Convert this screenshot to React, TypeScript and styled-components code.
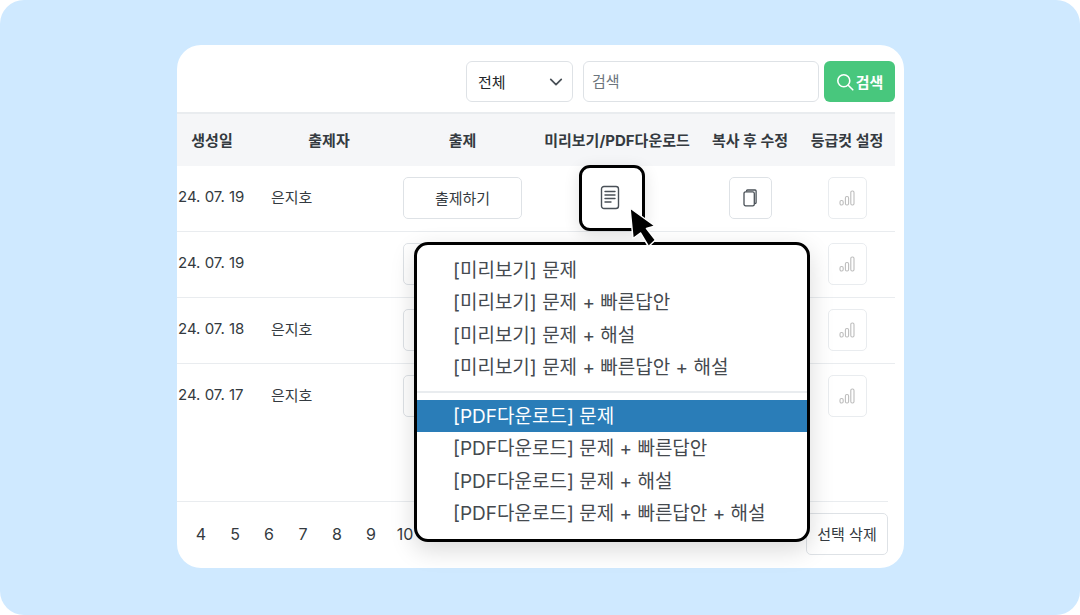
import styled, { createGlobalStyle } from "styled-components"

const GlobalStyle = createGlobalStyle`
    html, body { margin: 0; padding: 0; background: #fff; }
    body { font-family: Inter, "Noto Sans CJK KR", sans-serif; color: #212529; }
`

const ROWS = [
    { date: "24. 07. 19", author: "은지호" },
    { date: "24. 07. 19", author: "" },
    { date: "24. 07. 18", author: "은지호" },
    { date: "24. 07. 17", author: "은지호" },
]
const PREVIEW = ["문제", "문제 + 빠른답안", "문제 + 해설", "문제 + 빠른답안 + 해설"]
const PAGES = [4, 5, 6, 7, 8, 9, 10]

export default function App() {
    return (
        <>
            <GlobalStyle />
            <Stage>
                <Card>
                    <Toolbar>
                        <SelectBox>
                            전체
                            <svg width="14" height="14" viewBox="0 0 16 16" fill="none" stroke="#495057" strokeWidth="2" strokeLinecap="round" strokeLinejoin="round">
                                <path d="M2 5l6 6 6-6" />
                            </svg>
                        </SelectBox>
                        <SearchInput>검색</SearchInput>
                        <SearchButton>
                            <svg width="18" height="18" viewBox="0 0 18 18" fill="none" stroke="#fff" strokeWidth="1.6" strokeLinecap="round">
                                <circle cx="7.8" cy="7.8" r="6" />
                                <path d="M12.2 12.2l4.6 4.6" />
                            </svg>
                            검색
                        </SearchButton>
                    </Toolbar>
                    <HeadRow>
                        <DateCol>생성일</DateCol>
                        <AuthorCol>출제자</AuthorCol>
                        <ExamCol>출제</ExamCol>
                        <PreviewCol>미리보기/PDF다운로드</PreviewCol>
                        <CopyCol>복사 후 수정</CopyCol>
                        <GradeCol>등급컷 설정</GradeCol>
                    </HeadRow>
                    {ROWS.map((row, i) => (
                        <BodyRow key={i} $last={i === ROWS.length - 1}>
                            <DateCell>{row.date}</DateCell>
                            <AuthorCell>{row.author}</AuthorCell>
                            {/* the menu covers the label on the lower rows */}
                            <ExamCol><OutlineButton>{i === 0 ? "출제하기" : ""}</OutlineButton></ExamCol>
                            <PreviewCol>
                                {i === 0 && (
                                    <HighlightBox>
                                        <svg width="20" height="25" viewBox="0 0 20 25" fill="none" stroke="#495057" strokeWidth="1.4" strokeLinecap="round">
                                            <rect x="1.5" y="1.5" width="17" height="22" rx="2.5" />
                                            <path d="M5 6.5h10M5 10h10M5 13.5h10M5 17h6" />
                                        </svg>
                                    </HighlightBox>
                                )}
                            </PreviewCol>
                            <CopyCol>
                                {i === 0 && (
                                    <IconButton>
                                        <svg width="14" height="18" viewBox="0 0 14 18" fill="none" stroke="#495057" strokeWidth="1.3" strokeLinejoin="round">
                                            <path d="M3.5 2.6V2a1 1 0 0 1 1-1h7.6a1 1 0 0 1 1 1v11.5a1 1 0 0 1-1 1h-.6" />
                                            <rect x="1" y="2.8" width="10.3" height="14" rx="1.6" />
                                        </svg>
                                    </IconButton>
                                )}
                            </CopyCol>
                            <GradeCol>
                                <GradeButton>
                                    <svg width="16" height="16" viewBox="0 0 16 16" fill="none" stroke="#bdbdbd" strokeWidth="1.1">
                                        <rect x="1" y="10.5" width="3.2" height="4.5" rx="1.4" />
                                        <rect x="6.4" y="6.5" width="3.2" height="8.5" rx="1.4" />
                                        <rect x="11.8" y="1" width="3.2" height="14" rx="1.4" />
                                    </svg>
                                </GradeButton>
                            </GradeCol>
                        </BodyRow>
                    ))}
                    <Footer>
                        <Pages>
                            {PAGES.map((p) => <PageNum key={p}>{p}</PageNum>)}
                        </Pages>
                        <DeleteButton>선택 삭제</DeleteButton>
                    </Footer>
                </Card>
                <Menu>
                    {PREVIEW.map((t) => <MenuItem key={t}>[미리보기] {t}</MenuItem>)}
                    <MenuDivider />
                    {PREVIEW.map((t, i) => <MenuItem key={t} $active={i === 0}>[PDF다운로드] {t}</MenuItem>)}
                </Menu>
                <Cursor width="28" height="41" viewBox="0 0 28 41">
                    <path d="M1 1L26 19 17.5 21.5 26.5 33 19.5 39.5 11.5 26 4 31.5z" fill="#000" stroke="#fff" strokeWidth="1.5" strokeLinejoin="round" />
                </Cursor>
            </Stage>
        </>
    )
}

const Stage = styled.div`
    position: relative;
    width: 1080px;
    height: 615px;
    box-sizing: border-box;
    padding: 45px 176px 47px 177px;
    background: #cfe9ff;
    border-radius: 24px;
    overflow: hidden;
`

const Card = styled.div`
    height: 523px;
    padding-right: 9px;
    background: #fff;
    border-radius: 24px;
    overflow: hidden;
    display: flex;
    flex-direction: column;
`

const Toolbar = styled.div`
    height: 67px;
    flex: none;
    display: flex;
    align-items: center;
    justify-content: flex-end;
    gap: 10px;
    padding-top: 6px;
    box-sizing: border-box;
`

const SelectBox = styled.div`
    width: 107px;
    height: 41px;
    box-sizing: border-box;
    border: 1px solid #dee2e6;
    border-radius: 6px;
    padding: 0 9px 0 11px;
    display: flex;
    align-items: center;
    justify-content: space-between;
    font-size: 15px;
    color: #212529;
`

const SearchInput = styled.div`
    width: 236px;
    height: 41px;
    box-sizing: border-box;
    border: 1px solid #dee2e6;
    border-radius: 6px;
    padding: 0 8px 2px;
    display: flex;
    align-items: center;
    font-size: 15px;
    color: #6c757d;
`

const SearchButton = styled.div`
    width: 71px;
    height: 41px;
    margin-left: -5px;
    background: #48c77d;
    border-radius: 6px;
    color: #fff;
    font-size: 15px;
    font-weight: 700;
    display: flex;
    align-items: center;
    justify-content: center;
    gap: 2px;
`

const HeadRow = styled.div`
    height: 54px;
    flex: none;
    box-sizing: border-box;
    display: flex;
    align-items: center;
    background: #f5f6f8;
    border-top: 2px solid #e9ecef;
    padding-bottom: 2px;
    font-size: 15px;
    font-weight: 700;
    color: #343a40;
`

const BodyRow = styled.div<{ $last?: boolean }>`
    height: 66px;
    flex: none;
    box-sizing: border-box;
    display: flex;
    align-items: center;
    padding-bottom: 2px;
    border-bottom: 1px solid ${(p) => (p.$last ? "transparent" : "#e9ecef")};
    font-size: 15px;
    color: #343a40;
`

const Col = styled.div`
    flex: none;
    display: flex;
    align-items: center;
    justify-content: center;
    white-space: nowrap;
`

const DateCol = styled(Col)`
    width: 89px;
    box-sizing: border-box;
    padding-right: 19px;
`

const AuthorCol = styled(Col)`
    width: 126px;
`

const ExamCol = styled(Col)`
    width: 141px;
`

const PreviewCol = styled(Col)`
    width: 168px;
`

const CopyCol = styled(Col)`
    width: 98px;
`

const GradeCol = styled(Col)`
    width: 96px;
`

const DateCell = styled(Col)`
    width: 89px;
    box-sizing: border-box;
    justify-content: flex-start;
    padding: 0 0 2px 1px;
`

const AuthorCell = styled(Col)`
    width: 126px;
    box-sizing: border-box;
    justify-content: flex-start;
    padding: 0 0 2px 5px;
`

const OutlineButton = styled.div`
    width: 119px;
    height: 42px;
    box-sizing: border-box;
    border: 1px solid #dee2e6;
    border-radius: 5px;
    padding-bottom: 1px;
    display: flex;
    align-items: center;
    justify-content: center;
    font-size: 15px;
`

const HighlightBox = styled.div`
    width: 66px;
    height: 66px;
    margin-right: 10px;
    padding-right: 4px;
    box-sizing: border-box;
    border: 3px solid #000;
    border-radius: 11px;
    background: #fff;
    display: flex;
    align-items: center;
    justify-content: center;
    box-shadow: 0 4px 16px rgba(0, 0, 0, 0.12);
`

const IconButton = styled.div`
    width: 43px;
    height: 42px;
    box-sizing: border-box;
    border: 1px solid #dee2e6;
    border-radius: 5px;
    display: flex;
    align-items: center;
    justify-content: center;
`

const GradeButton = styled(IconButton)`
    width: 39px;
    border-color: #e9ecef;
`

const Footer = styled.div`
    margin-top: auto;
    margin-right: 7px;
    height: 67px;
    flex: none;
    box-sizing: border-box;
    border-top: 1px solid #e9ecef;
    display: flex;
    align-items: center;
    justify-content: space-between;
    padding: 11px 0 13px;
`

const Pages = styled.div`
    display: flex;
    padding-left: 7px;
`

const PageNum = styled.span`
    width: 34px;
    text-align: center;
    font-size: 16px;
    color: #343a40;
`

const DeleteButton = styled.div`
    width: 82px;
    height: 42px;
    box-sizing: border-box;
    border: 1px solid #dee2e6;
    border-radius: 5px;
    padding-bottom: 2px;
    display: flex;
    align-items: center;
    justify-content: center;
    font-size: 15px;
    color: #343a40;
`

const Menu = styled.div`
    position: absolute;
    left: 414px;
    top: 242px;
    width: 396px;
    height: 300px;
    box-sizing: border-box;
    padding: 9px 0;
    background: #fff;
    border: 3px solid #000;
    border-radius: 14px;
    box-shadow: 0 8px 24px rgba(0, 0, 0, 0.15);
`

const MenuItem = styled.div<{ $active?: boolean }>`
    height: 32.4px;
    line-height: 34px;
    padding-left: 36px;
    font-size: 19px;
    white-space: nowrap;
    color: ${(p) => (p.$active ? "#fff" : "#454a4f")};
    background: ${(p) => (p.$active ? "#2a7db8" : "transparent")};
`

const MenuDivider = styled.div`
    height: 2px;
    margin: 7.4px 0 7px;
    background: #e9ecef;
`

const Cursor = styled.svg`
    position: absolute;
    left: 629px;
    top: 207px;
`
